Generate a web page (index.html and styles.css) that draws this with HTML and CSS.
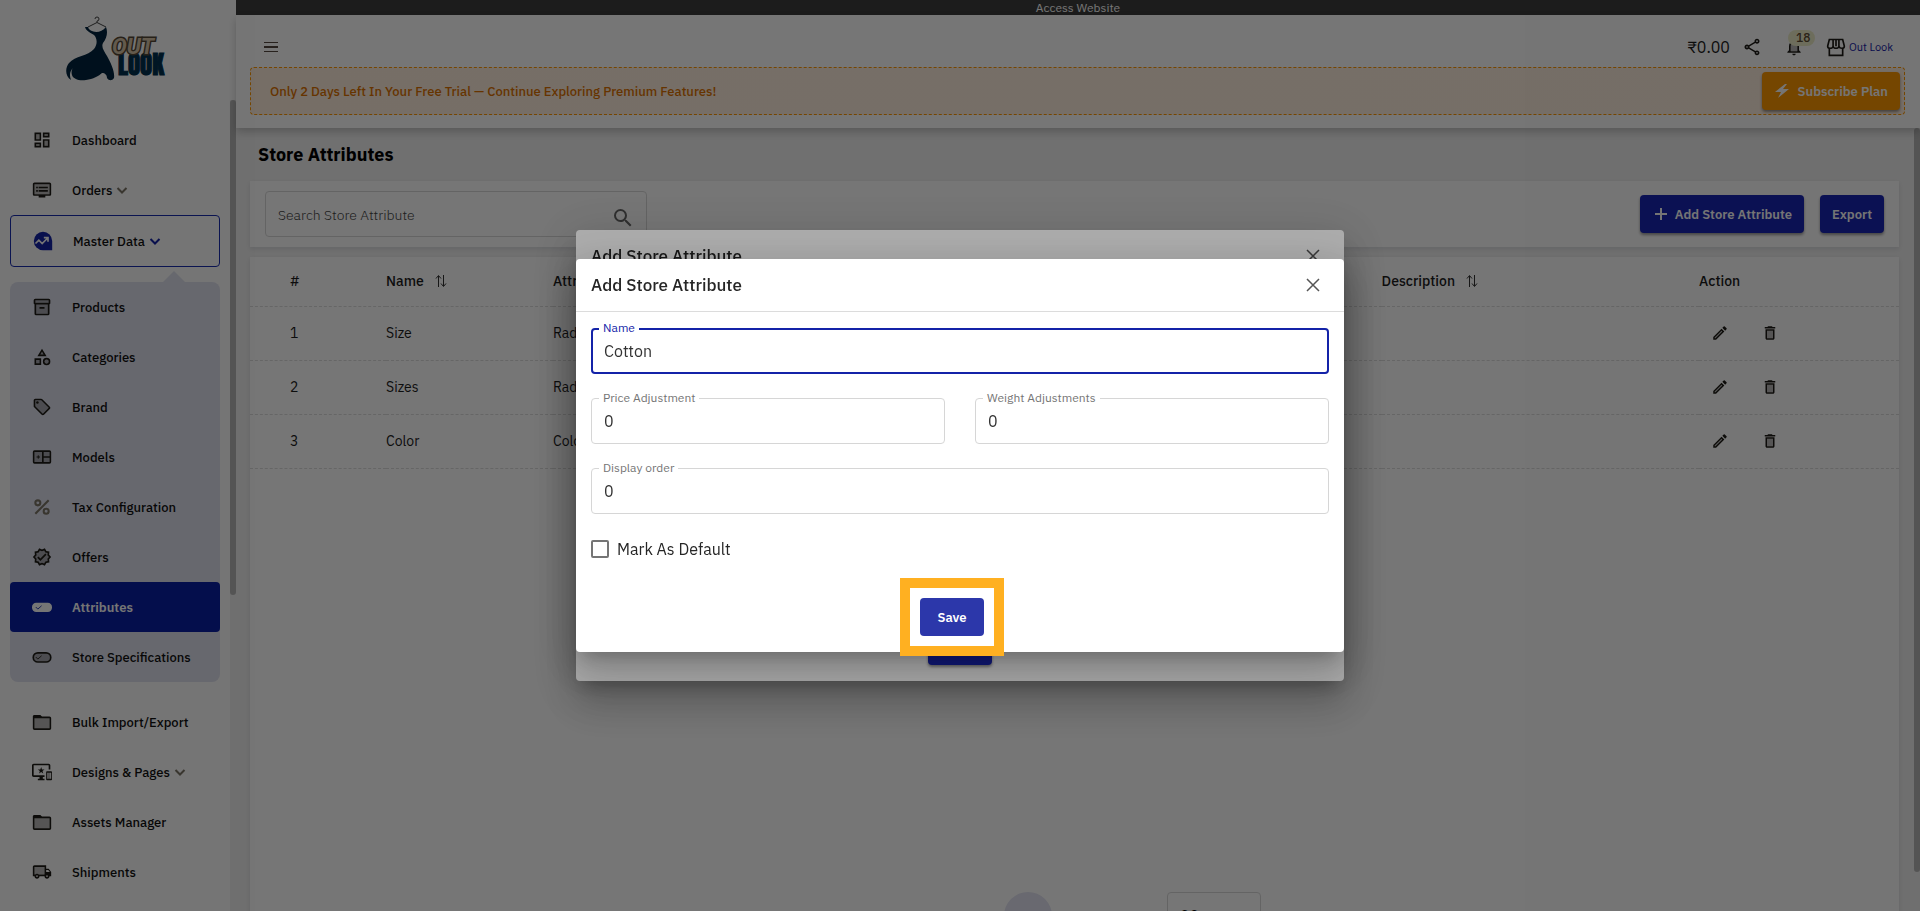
FILE: index.html
```html
<!DOCTYPE html>
<html lang="en">
<head>
  <meta charset="UTF-8" />
  <meta name="viewport" content="width=device-width, initial-scale=1.0"/>
  <title>Store Attributes</title>
  <link rel="stylesheet" href="styles.css">
</head>
<body>

  <!-- icon set -->
  <svg class="sprite" aria-hidden="true">
    <symbol id="i-dashboard" viewBox="0 0 24 24"><path opacity=".3" d="M5 5h4v6H5zm10 8h4v6h-4zM5 17h4v2H5zM15 5h4v2h-4z"/><path d="M3 13h8V3H3v10zm2-8h4v6H5V5zm8 16h8V11h-8v10zm2-8h4v6h-4v-6zM13 3v6h8V3h-8zm6 4h-4V5h4v2zM3 21h8v-6H3v6zm2-4h4v2H5v-2z"/></symbol>
    <symbol id="i-orders" viewBox="0 0 24 24"><path opacity=".3" d="M3 5h18v12H3z"/><path d="M21 3H3c-1.1 0-2 .9-2 2v12c0 1.100.9 2 2 2h5v2h8v-2h5c1.100 0 2-.9 2-2V5c0-1.100-.9-2-2-2zm0 14H3V5h18v12zM8 8h11v2H8zm0 4h11v2H8zM5 8h2v2H5zm0 4h2v2H5z"/></symbol>
    <symbol id="i-master" viewBox="0 0 24 24"><path d="M12 1a11 11 0 1 0 0 22h11v-11A11 11 0 0 0 12 1z"/><path fill="none" stroke="#fff" stroke-width="2" d="M3 15l4-4 4 4 6-6M13 8h5v5"/></symbol>
    <symbol id="i-products" viewBox="0 0 24 24"><path opacity=".3" d="M4 8h16v12H4zM3 3h18v4H3z"/><path d="M20 2H4a2 2 0 0 0-2 2v3.500c0 .6.400 1.100 1 1.300V20a2 2 0 0 0 2 2h14a2 2 0 0 0 2-2V8.800c.6-.2 1-.7 1-1.300V4a2 2 0 0 0-2-2zm-1 18H5V9h14v11zm1-13H4V4h16v3zM9 12h6v2H9z"/></symbol>
    <symbol id="i-categories" viewBox="0 0 24 24"><path opacity=".3" d="M12 5.800 9.500 10h5zM5 15.500h4v4H5zm12.500-.5a2.500 2.500 0 1 1 0 5 2.500 2.500 0 0 1 0-5z"/><path d="M12 2 6.500 11h11L12 2zm0 3.840L13.930 9h-3.870L12 5.840zM17.500 13a4.500 4.500 0 1 0 0 9 4.500 4.500 0 0 0 0-9zm0 7a2.500 2.500 0 1 1 0-5 2.500 2.500 0 0 1 0 5zM3 21.500h8v-8H3v8zm2-6h4v4H5v-4z"/></symbol>
    <symbol id="i-brand" viewBox="0 0 24 24"><path opacity=".3" d="M11 4H4v7l9 9 7-7z"/><path d="m21.410 11.580-9-9C12.050 2.220 11.550 2 11 2H4c-1.100 0-2 .9-2 2v7c0 .55.220 1.050.59 1.420l9 9c.36.360.86.580 1.410.580s1.050-.22 1.410-.59l7-7c.37-.36.590-.86.590-1.410s-.23-1.060-.59-1.420zM13 20.010 4 11V4h7v-.010l9 9-7 7.020z"/><circle cx="6.500" cy="6.500" r="1.500"/></symbol>
    <symbol id="i-models" viewBox="0 0 24 24"><path opacity=".3" d="M3 5h18v14H3z"/><path d="M21 4H3a2 2 0 0 0-2 2v12a2 2 0 0 0 2 2h18a2 2 0 0 0 2-2V6a2 2 0 0 0-2-2zM12 18H3V6h9zm9 0h-7v-5h7zm0-7h-7V6h7zM7 10h1v1.500h1.500v1H8V14H7v-1.500H5.500v-1H7z"/></symbol>
    <symbol id="i-percent" viewBox="0 0 24 24"><g fill="none" stroke="currentColor" stroke-width="2.500"><circle cx="7" cy="7" r="3"/><circle cx="17" cy="17" r="3"/><path d="M20 4 4 20"/></g></symbol>
    <symbol id="i-offers" viewBox="0 0 24 24"><path opacity=".3" d="M12 3l3 1 3 1 2 4 1 3-2 4-1 3-3 1-3 1-3-1-3-1-2-4-1-3 2-4 1-3z"/><path d="m23 12-2.440-2.780.34-3.680-3.610-.82-1.890-3.180L12 3 8.600 1.540 6.710 4.720l-3.610.810.340 3.680L1 12l2.440 2.780-.34 3.690 3.610.820 1.890 3.180L12 21l3.400 1.460 1.890-3.180 3.610-.82-.34-3.680L23 12zm-4.510 2.110.260 2.790-2.740.620-1.430 2.410L12 18.820l-2.580 1.110-1.430-2.410-2.740-.62.260-2.800L3.660 12l1.850-2.120-.26-2.780 2.740-.61 1.430-2.410L12 5.180l2.580-1.110 1.430 2.410 2.740.62-.26 2.790L20.340 12l-1.850 2.110zM10.090 13.750l-2.320-2.330-1.480 1.490 3.800 3.810 7.340-7.360-1.480-1.490z"/></symbol>
    <symbol id="i-attr" viewBox="0 0 24 24"><rect x="0" y="7" width="24" height="11" rx="5"/><path fill="none" stroke="#0a20a6" d="m4.500 12 2.500 2.500 4.500-4"/></symbol>
    <symbol id="i-spec" viewBox="0 0 24 24"><rect x="1.500" y="7" width="21" height="11" rx="5.500" fill="currentColor" fill-opacity=".3" stroke="currentColor" stroke-width="2"/><path fill="none" stroke="currentColor" d="m4.500 12 2.500 2.500 4.500-4"/></symbol>
    <symbol id="i-folder" viewBox="0 0 24 24"><path opacity=".3" d="M3 7h18v13H3z"/><path d="M21 5.500h-9l-2-2H2.500C1.500 3.500 1 4.500 1 5.500v14c0 1.100.9 2 2 2h18c1.100 0 2-.9 2-2v-12c0-1.100-.9-2-2-2zm0 14H3v-12h18v12z"/></symbol>
    <symbol id="i-designs" viewBox="0 0 24 24"><path opacity=".3" d="M18 12h4v9h-4z"/><path d="M23 11h-5c-.55 0-1 .45-1 1v9c0 .55.45 1 1 1h5c.55 0 1-.45 1-1v-9c0-.55-.45-1-1-1zm0 9h-5v-7h5v7zM20 2H2C.9 2 0 2.900 0 4v12c0 1.100.9 2 2 2h7v2H7v2h8v-2h-2v-2h2v-2H2V4h18v5h2V4c0-1.100-.9-2-2-2zm-8 7-1-3-1 3H7l2.400 1.800-.9 3 2.500-1.900 2.500 1.900-.9-3L15 9z"/></symbol>
    <symbol id="i-truck" viewBox="0 0 24 24"><path opacity=".3" d="M3 6h12v9H3z"/><path d="M20 8h-3V4H3c-1.100 0-2 .9-2 2v11h2c0 1.660 1.340 3 3 3s3-1.340 3-3h6c0 1.660 1.340 3 3 3s3-1.340 3-3h2v-5l-3-4zm-.5 1.500 1.960 2.500H17V9.500h2.500zM6 18c-.55 0-1-.45-1-1s.45-1 1-1 1 .45 1 1-.45 1-1 1zm2.220-3C7.670 14.390 6.890 14 6 14s-1.670.390-2.220 1H3V6h12v9H8.220zM18 18c-.55 0-1-.45-1-1s.45-1 1-1 1 .45 1 1-.45 1-1 1z"/></symbol>
    <symbol id="i-chevron" viewBox="0 0 12 12"><path fill="none" stroke="currentColor" stroke-width="2" d="m1.500 4 4.500 4.500L10.500 4"/></symbol>
    <symbol id="i-share" viewBox="0 0 24 24"><path d="M18 16.080c-.76 0-1.440.3-1.960.77L8.910 12.700c.05-.23.090-.46.090-.7s-.04-.47-.09-.7l7.050-4.110c.54.500 1.250.810 2.040.810 1.660 0 3-1.340 3-3s-1.340-3-3-3-3 1.340-3 3c0 .24.040.47.090.7L8.040 9.810C7.500 9.310 6.790 9 6 9c-1.660 0-3 1.340-3 3s1.340 3 3 3c.79 0 1.500-.31 2.040-.81l7.120 4.160c-.05.21-.08.43-.08.650 0 1.610 1.310 2.920 2.920 2.920s2.920-1.310 2.920-2.920-1.310-2.920-2.920-2.920z"/><circle cx="18" cy="5" r="1" fill="#fff"/><circle cx="6" cy="12" r="1" fill="#fff"/><circle cx="18" cy="19" r="1" fill="#fff"/></symbol>
    <symbol id="i-bell" viewBox="0 0 24 24"><path opacity=".3" d="M8 6h8v11H8z"/><path d="M12 22c1.100 0 2-.9 2-2h-4c0 1.100.9 2 2 2zm6-6v-5c0-3.070-1.630-5.640-4.500-6.320V4a1.500 1.500 0 0 0-3 0v.68C7.640 5.360 6 7.920 6 11v5l-2 2v1h16v-1l-2-2zm-2 1H8v-6c0-2.480 1.510-4.500 4-4.500s4 2.020 4 4.500v6z"/></symbol>
    <symbol id="i-store" viewBox="0 0 24 24"><g fill="none" stroke="currentColor" stroke-width="2"><path d="M4 13v9h16v-9M4 3h16l2 8c0 1.500-1.500 2.500-3 2.500s-3-1-3.500-2.500c0 1.500-2 2.500-3.500 2.500S8.500 12.500 8.500 11C8.500 12.500 6.500 13.500 5 13.500S2 12.500 2 11zM8.500 3v8M12 3v8M15.500 3v8"/></g></symbol>
    <symbol id="i-bolt" viewBox="0 0 16 16"><path d="M11 1 1 9h6l-3 6L15 6H9l4-5z"/></symbol>
    <symbol id="i-plus" viewBox="0 0 12 12"><path fill="none" stroke="currentColor" stroke-width="2" d="M6 0v12M0 6h12"/></symbol>
    <symbol id="i-search" viewBox="0 0 24 24"><path d="M15.500 14h-.79l-.28-.27A6.470 6.470 0 0 0 16 9.500 6.500 6.500 0 1 0 9.500 16c1.610 0 3.090-.59 4.230-1.570l.27.280v.790l5 4.990L20.490 19l-4.990-5zm-6 0C7.010 14 5 11.990 5 9.500S7.010 5 9.500 5 14 7.010 14 9.500 11.990 14 9.500 14z"/></symbol>
    <symbol id="i-sort" viewBox="0 0 12 14"><path fill="none" stroke="currentColor" stroke-width="1" d="M3.500 13V2M1 4.500 3.500 1.500 6 4.500M8.500 1v11M6 9.500l2.500 3 2.500-3"/></symbol>
    <symbol id="i-edit" viewBox="0 0 24 24"><path opacity=".3" d="M5 18.080V19h.92l9.060-9.060-.92-.92z"/><path d="M20.710 7.040a1 1 0 0 0 0-1.410l-2.340-2.340a1 1 0 0 0-1.410 0l-1.830 1.830 3.750 3.750 1.830-1.830zM3 17.250V21h3.750L17.810 9.940l-3.750-3.750L3 17.250zM5.920 19H5v-.92l9.060-9.060.92.920L5.920 19z"/></symbol>
    <symbol id="i-trash" viewBox="0 0 24 24"><path opacity=".3" d="M8 9h8v10H8z"/><path d="M6 19c0 1.100.9 2 2 2h8c1.100 0 2-.9 2-2V7H6v12zM8 9h8v10H8V9zm7.500-5-1-1h-5l-1 1H5v2h14V4z"/></symbol>
    <symbol id="i-close" viewBox="0 0 14 14"><path fill="none" stroke="currentColor" stroke-width="1.500" d="m1 1 12 12M13 1 1 13"/></symbol>
  </svg>

  <div class="app">
    <aside class="sidebar">
      <a class="logo" href="#" aria-label="Out Look">
        <svg width="104" height="66" viewBox="66 16 104 66">
          <path class="hanger" d="M95 19a2 2 0 1 1 2 2v1.500l9 4.500M97 22.500 88 27"/>
          <path class="dress" d="M88 27c1 5 12 8 18 0 2 5 1 11-3 16-2 4 1 8 4 13 4 7 8 16 7 22-2 3-5 3-7 0 0-3-2-5-5-5-3 3-9 6-16 7-7 1-13-1-14-5-1-3 0-6 1-7-3 3-4 7-2 12-6-4-6-12-2-17 6-7 19-7 25-14 4-5 3-11 0-14-3-2-8-4-9-8z"/>
          <text class="logo-look" x="118" y="75">LOOK</text>
          <text class="logo-out" x="112" y="54">OUT</text>
        </svg>
      </a>
      <div class="sidebar-scroll">
        <nav class="nav">
          <a class="nav-item" href="#"><svg class="icon"><use href="#i-dashboard"/></svg>Dashboard</a>
          <a class="nav-item" href="#"><svg class="icon"><use href="#i-orders"/></svg>Orders <svg class="chevron"><use href="#i-chevron"/></svg></a>
          <a class="nav-item nav-open" href="#"><svg class="icon"><use href="#i-master"/></svg>Master Data <svg class="chevron"><use href="#i-chevron"/></svg></a>
          <div class="submenu">
            <a class="nav-item" href="#"><svg class="icon"><use href="#i-products"/></svg>Products</a>
            <a class="nav-item" href="#"><svg class="icon"><use href="#i-categories"/></svg>Categories</a>
            <a class="nav-item" href="#"><svg class="icon"><use href="#i-brand"/></svg>Brand</a>
            <a class="nav-item" href="#"><svg class="icon"><use href="#i-models"/></svg>Models</a>
            <a class="nav-item" href="#"><svg class="icon icon-soft"><use href="#i-percent"/></svg>Tax Configuration</a>
            <a class="nav-item" href="#"><svg class="icon"><use href="#i-offers"/></svg>Offers</a>
            <a class="nav-item nav-active" href="#"><svg class="icon"><use href="#i-attr"/></svg>Attributes</a>
            <a class="nav-item" href="#"><svg class="icon"><use href="#i-spec"/></svg>Store Specifications</a>
          </div>
          <a class="nav-item" href="#"><svg class="icon"><use href="#i-folder"/></svg>Bulk Import/Export</a>
          <a class="nav-item" href="#"><svg class="icon"><use href="#i-designs"/></svg>Designs &amp; Pages <svg class="chevron"><use href="#i-chevron"/></svg></a>
          <a class="nav-item" href="#"><svg class="icon"><use href="#i-folder"/></svg>Assets Manager</a>
          <a class="nav-item" href="#"><svg class="icon"><use href="#i-truck"/></svg>Shipments</a>
        </nav>
        <div class="rail rail-side"><div class="thumb"></div></div>
      </div>
    </aside>

    <div class="main">
      <a class="access-bar" href="#">Access Website</a>
      <header class="header">
        <div class="header-row">
          <button class="icon-btn" type="button" aria-label="Menu"><span class="burger"></span></button>
          <div class="header-tools">
            <span class="balance">₹0.00</span>
            <button class="icon-btn" type="button" aria-label="Share"><svg class="icon"><use href="#i-share"/></svg></button>
            <button class="icon-btn bell" type="button" aria-label="Notifications"><svg class="icon"><use href="#i-bell"/></svg><span class="badge">18</span></button>
            <a class="store-link" href="#"><svg class="icon"><use href="#i-store"/></svg>Out Look</a>
          </div>
        </div>
        <div class="trial">
          <span>Only 2 Days Left In Your Free Trial — Continue Exploring Premium Features!</span>
          <button class="btn btn-orange" type="button"><svg class="btn-icon"><use href="#i-bolt"/></svg>Subscribe Plan</button>
        </div>
      </header>

      <div class="content">
        <main class="page">
          <h1>Store Attributes</h1>
          <section class="card toolbar">
            <div class="search">
              <input type="text" placeholder="Search Store Attribute" aria-label="Search Store Attribute">
              <svg class="search-icon"><use href="#i-search"/></svg>
            </div>
            <div class="toolbar-actions">
              <button class="btn" type="button"><svg class="plus"><use href="#i-plus"/></svg>Add Store Attribute</button>
              <button class="btn" type="button">Export</button>
            </div>
          </section>
          <section class="card list">
            <table>
              <thead>
                <tr>
                  <th class="col-id">#</th>
                  <th class="col-name">Name <svg class="sort"><use href="#i-sort"/></svg></th>
                  <th class="col-type">Attribute Type</th>
                  <th class="col-desc">Description <svg class="sort"><use href="#i-sort"/></svg></th>
                  <th>Action</th>
                </tr>
              </thead>
              <tbody>
                <tr>
                  <td>1</td><td>Size</td><td>Radio Button</td><td></td>
                  <td><div class="row-actions"><button class="icon-btn" type="button" aria-label="Edit"><svg class="icon"><use href="#i-edit"/></svg></button><button class="icon-btn" type="button" aria-label="Delete"><svg class="icon"><use href="#i-trash"/></svg></button></div></td>
                </tr>
                <tr>
                  <td>2</td><td>Sizes</td><td>Radio Button</td><td></td>
                  <td><div class="row-actions"><button class="icon-btn" type="button" aria-label="Edit"><svg class="icon"><use href="#i-edit"/></svg></button><button class="icon-btn" type="button" aria-label="Delete"><svg class="icon"><use href="#i-trash"/></svg></button></div></td>
                </tr>
                <tr>
                  <td>3</td><td>Color</td><td>Color Square</td><td></td>
                  <td><div class="row-actions"><button class="icon-btn" type="button" aria-label="Edit"><svg class="icon"><use href="#i-edit"/></svg></button><button class="icon-btn" type="button" aria-label="Delete"><svg class="icon"><use href="#i-trash"/></svg></button></div></td>
                </tr>
              </tbody>
            </table>
            <div class="paginator">
              <button class="page-number" type="button" aria-label="Page 1"></button>
              <select class="page-size" aria-label="Rows per page"><option>20</option></select>
            </div>
          </section>
        </main>
        <div class="rail rail-page"><div class="thumb"></div></div>
      </div>
    </div>
  </div>

  <!-- attribute dialog, behind -->
  <div class="backdrop">
    <div class="dialog">
      <div class="dialog-title"><h2>Add Store Attribute</h2><button class="close" type="button" aria-label="Close"><svg><use href="#i-close"/></svg></button></div>
      <form class="dialog-body">
        <div class="field"><input type="text" aria-label="Name"></div>
        <div class="field"><textarea aria-label="Description"></textarea></div>
        <div class="dialog-actions"><button class="btn btn-save" type="button" aria-label="Save"></button></div>
      </form>
    </div>
  </div>

  <!-- attribute value dialog -->
  <div class="backdrop">
    <div class="dialog">
      <div class="dialog-title"><h2>Add Store Attribute</h2><button class="close" type="button" aria-label="Close"><svg><use href="#i-close"/></svg></button></div>
      <form class="dialog-body">
        <div class="field field-focus"><input id="name" type="text" value="Cotton"><label for="name">Name</label></div>
        <div class="field-row">
          <div class="field"><input id="price" type="text" value="0"><label for="price">Price Adjustment</label></div>
          <div class="field"><input id="weight" type="text" value="0"><label for="weight">Weight Adjustments</label></div>
        </div>
        <div class="field"><input id="order" type="text" value="0"><label for="order">Display order</label></div>
        <label class="check"><input type="checkbox">Mark As Default</label>
        <div class="dialog-actions dialog-actions-value">
          <div class="highlight"><button class="btn btn-save btn-hover" type="button">Save</button></div>
        </div>
      </form>
    </div>
  </div>

</body>
</html>
```

FILE: styles.css
```css
* {
  box-sizing: border-box;
}
body {
  margin: 0;
  height: 100vh;
  overflow: hidden;
  font-family: "IBM Plex Sans", Roboto, "Noto Sans", sans-serif;
  font-size: 14px;
  color: #1c1c1c;
  background: #f1f1f1;
}
button, input, select, textarea {
  font-family: inherit;
}
a {
  color: inherit;
  text-decoration: none;
}
.sprite {
  display: none;
}
.app {
  display: flex;
  height: 100vh;
}
.icon {
  width: 20px;
  height: 20px;
  fill: currentColor;
  color: #1e1c16;
  flex: none;
}
.icon-soft {
  color: #7d7668;
}
.icon-btn {
  display: flex;
  padding: 0;
  border: 0;
  background: none;
}

/* sidebar */
.sidebar {
  display: flex;
  flex-direction: column;
  width: 236px;
  flex: none;
  background: #fff;
}
.logo {
  display: flex;
  justify-content: center;
  height: 100px;
  padding-top: 16px;
  flex: none;
}
.hanger {
  fill: none;
  stroke: #444;
  stroke-width: 1;
}
.dress {
  fill: #00243f;
}
.logo-look {
  font: 25px Anton, "Bebas Neue", "Liberation Sans Narrow", sans-serif;
  fill: #00304f;
  stroke: #00304f;
  stroke-width: 1;
}
.logo-out {
  font: italic bold 22px "Permanent Marker", Roboto, sans-serif;
  fill: #d8c4a8;
  stroke: #554838;
  stroke-width: 3;
  paint-order: stroke;
}
.sidebar-scroll {
  display: flex;
  flex: 1;
  min-height: 0;
}
.nav {
  flex: 1;
  padding: 15px 10px 0;
  overflow: hidden;
}
.nav-item {
  display: flex;
  align-items: center;
  height: 50px;
  padding-left: 22px;
  color: #111;
  font-size: 13px;
  font-weight: 500;
}
.nav-item .icon {
  margin-right: 20px;
}
.chevron {
  width: 12px;
  height: 12px;
  margin-left: 4px;
  color: #7d7668;
}
.nav-open {
  height: 52px;
  border: 1px solid #1a2cb0;
  border-radius: 4px;
}
.nav-open .icon,
.nav-open .chevron {
  color: #1423a8;
}
.submenu {
  position: relative;
  margin: 15px 0;
  border-radius: 8px;
  background: #e1e3f0;
}
.submenu::before {
  content: "";
  position: absolute;
  right: 35px;
  bottom: 100%;
  border: 11px solid transparent;
  border-top: 0;
  border-bottom-color: #e1e3f0;
}
.nav-active {
  border-radius: 4px;
  background: #0a20a6;
  color: #fff;
  font-weight: 600;
}
.nav-active .icon {
  color: #fff;
}

/* scroll rails */
.rail {
  width: 6px;
  flex: none;
}
.rail-side {
  background: #f1f1f1;
}
.thumb {
  border-radius: 3px;
  background: #b8b8b8;
}
.rail-side .thumb {
  height: 61%;
}
.rail-page .thumb {
  height: 95%;
}

/* header */
.main {
  display: flex;
  flex-direction: column;
  flex: 1;
  min-width: 0;
}
.access-bar {
  height: 15px;
  background: #3d3d3d;
  color: #fff;
  font-size: 12px;
  line-height: 15px;
  text-align: center;
}
.header {
  position: relative;
  padding: 0 15px 13px 14px;
  background: #fff;
  box-shadow: 0 4px 8px rgba(0, 0, 0, .2);
}
.header-row {
  display: flex;
  justify-content: space-between;
  height: 52px;
  padding: 12px 12px 0 14px;
}
.header-row > .icon-btn,
.header-tools {
  height: 40px;
  align-items: center;
}
.burger {
  width: 14px;
  height: 10px;
  border: solid #55483f;
  border-width: 1px 0;
  background: linear-gradient(#55483f, #55483f) center / 100% 2px no-repeat;
}
.header-tools {
  display: flex;
}
.balance {
  margin-right: 12px;
  font-size: 16px;
}
.bell {
  position: relative;
  margin: 0 22px;
}
.badge {
  position: absolute;
  left: 4px;
  top: -7px;
  padding: 0 5px 0 8px;
  border-radius: 8px;
  background: #eeeec8;
  color: #5c4a32;
  font-size: 12px;
  font-weight: 500;
  line-height: 16px;
}
.store-link {
  display: flex;
  align-items: center;
  gap: 3px;
  color: #1423a8;
  font-size: 11px;
}
.trial {
  display: flex;
  align-items: center;
  justify-content: space-between;
  height: 48px;
  padding: 0 4px 0 19px;
  border: 1px dashed #ff9800;
  border-radius: 4px;
  background: linear-gradient(90deg, #ffeedd, #ffefe0);
  color: #dd7200;
  font-size: 13px;
  font-weight: 500;
}

/* buttons */
.btn {
  display: flex;
  align-items: center;
  justify-content: center;
  height: 38px;
  padding: 0 12px;
  border: 0;
  border-radius: 4px;
  background: #1a25b5;
  color: #fff;
  font-size: 13px;
  font-weight: 600;
  box-shadow: 0 2px 3px rgba(0, 0, 0, .4);
}
.btn-orange {
  background: #ff9800;
}
.btn-icon {
  width: 16px;
  height: 16px;
  margin-right: 8px;
  fill: currentColor;
}
.plus {
  width: 12px;
  height: 12px;
  margin: 0 8px 0 3px;
}
.btn-save {
  width: 64px;
}
.btn-hover {
  background: #2c37aa;
  box-shadow: none;
}

/* page */
.content {
  display: flex;
  flex: 1;
  min-height: 0;
}
.page {
  display: flex;
  flex-direction: column;
  flex: 1;
  min-width: 0;
  padding: 0 15px 0 14px;
  overflow: hidden;
}
h1 {
  margin: 0;
  padding: 0 8px;
  color: #000;
  font-size: 18px;
  font-weight: 700;
  line-height: 53px;
}
.card {
  flex: none;
  background: #fff;
  box-shadow: 0 2px 4px rgba(30, 40, 80, .1);
}
.toolbar {
  display: flex;
  align-items: center;
  justify-content: space-between;
  height: 66px;
  margin-bottom: 10px;
  padding: 0 15px;
}
.search {
  display: flex;
  align-items: center;
  width: 382px;
  height: 46px;
  padding: 0 11px 0 12px;
  border: 1px solid #d8d8d8;
  border-radius: 4px;
}
.search input {
  flex: 1;
  padding: 2px 0 0;
  border: 0;
  background: none;
  color: #444;
  font-size: 14px;
  font-weight: 300;
}
.search input::placeholder {
  color: #444;
}
.search-icon {
  width: 24px;
  height: 24px;
  margin-top: 8px;
  fill: #666;
}
.toolbar-actions {
  display: flex;
  gap: 16px;
}
.list {
  min-height: calc(100vh - 219px);
  display: flex;
  flex-direction: column;
  justify-content: space-between;
}
table {
  width: 100%;
  table-layout: fixed;
  border-collapse: collapse;
}
th, td {
  height: 54px;
  padding: 0;
  border-bottom: 1px dashed #dcdcdc;
  text-align: left;
  font-size: 14px;
}
th {
  height: 49px;
  font-weight: 500;
}
th:first-child, td:first-child {
  padding-left: 40px;
}
.col-id { width: 8.25%; }
.col-name { width: 10.125%; }
.col-type { width: 50.25%; }
.col-desc { width: 19.25%; }
.sort {
  width: 12px;
  height: 14px;
  margin-left: 8px;
  color: #333;
  vertical-align: -2px;
}
.row-actions {
  display: flex;
  gap: 32px;
  padding-left: 12px;
}
.row-actions .icon {
  width: 18px;
  height: 18px;
}
.paginator {
  display: flex;
  justify-content: center;
  gap: 115px;
  padding: 0 0 9px 116px;
}
.page-number {
  width: 48px;
  height: 48px;
  border: 0;
  border-radius: 50%;
  background: #e3e4f2;
}
.page-size {
  width: 94px;
  height: 48px;
  padding: 0 12px;
  border: 1px solid #d8d8d8;
  border-radius: 4px;
  background: none;
  font-size: 16px;
  appearance: none;
}

/* dialogs */
.backdrop {
  position: fixed;
  inset: 0;
  display: grid;
  place-items: center;
  background: rgba(0, 0, 0, .32);
}
.dialog {
  width: 40%;
  border-radius: 4px;
  background: #fff;
  color: #262626;
  box-shadow: 0 11px 15px -7px rgba(0, 0, 0, .2), 0 24px 38px 3px rgba(0, 0, 0, .14), 0 9px 46px 8px rgba(0, 0, 0, .12);
}
.dialog-title {
  display: flex;
  align-items: center;
  justify-content: space-between;
  height: 53px;
  padding: 0 24px 0 15px;
  border-bottom: 1px solid #dcdcdc;
}
h2 {
  margin: 0;
  font-size: 17px;
  font-weight: 500;
}
.close {
  display: flex;
  padding: 0;
  border: 0;
  background: none;
  color: #555;
}
.close svg {
  width: 14px;
  height: 14px;
}
.dialog-body {
  display: flex;
  flex-direction: column;
  gap: 24px;
  padding: 16px 15px;
}
.field {
  position: relative;
  flex: 1;
}
.field-row {
  display: flex;
  gap: 30px;
}
.field input,
.field textarea {
  display: block;
  width: 100%;
  height: 46px;
  padding: 0 12px;
  border: 1px solid #d6d6d6;
  border-radius: 4px;
  background: #fff;
  color: #333;
  font-size: 16px;
}
.field textarea {
  height: 218px;
  resize: none;
}
.field label {
  position: absolute;
  top: -8px;
  left: 8px;
  padding: 0 4px;
  background: #fff;
  color: #757575;
  font-size: 12px;
  line-height: 16px;
}
.field-focus input {
  padding: 0 11px;
  border: 2px solid #1423a8;
}
.field-focus label {
  color: #1423a8;
}
.check {
  display: flex;
  align-items: center;
  gap: 8px;
  height: 22px;
  font-size: 16px;
}
.check input {
  width: 18px;
  height: 18px;
  margin: 0;
  border: 2px solid #757575;
  border-radius: 2px;
  appearance: none;
}
.dialog-actions {
  display: flex;
  justify-content: center;
  margin-top: 16px;
}
.dialog-actions-value {
  margin-top: 14px;
  padding-right: 16px;
}
/* frame around the save button */
.highlight {
  position: relative;
}
.highlight::before {
  content: "";
  position: absolute;
  inset: -20px;
  border: 10px solid #ffb021;
  background: #fff;
}
.highlight .btn {
  position: relative;
}
```
